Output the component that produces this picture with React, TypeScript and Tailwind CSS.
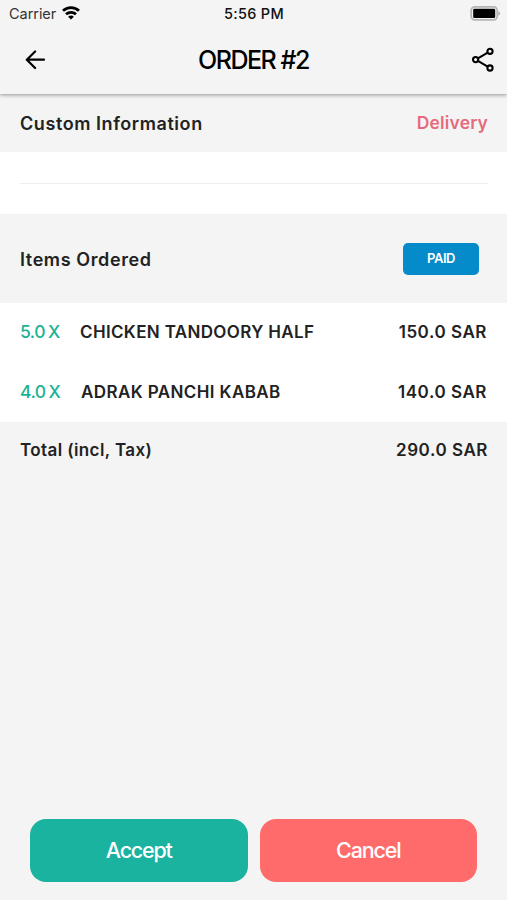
const items = [
  { qty: '5.0', name: 'CHICKEN TANDOORY HALF', price: '150.0 SAR', nameClass: 'ml-[19px] tracking-[0.35px]' },
  { qty: '4.0', name: 'ADRAK PANCHI KABAB', price: '140.0 SAR', nameClass: 'ml-5 tracking-[0.4px]' },
];

function StatusBar() {
  return (
    <div className="grid h-7 grid-cols-3 items-center pl-2 pr-[7px] text-[14.5px] leading-7">
      <div className="flex items-center gap-[6px]">
        <span className="pl-px text-[#333] tracking-[-0.05px]">Carrier</span>
        <svg width="18" height="14" viewBox="0 0 18 14" fill="none" stroke="#000" strokeWidth="2.7" className="mb-[3px]">
          <path d="M1 4.8C5.4.5 12.6.5 17 4.8" />
          <path d="M4 8.3C6.8 5.6 11.2 5.6 14 8.3" />
          <path d="M9 13.6 6.1 10.7C7.7 9.2 10.3 9.2 11.9 10.7Z" fill="#000" stroke="none" />
        </svg>
      </div>
      <span className="text-center font-medium tracking-[0.3px] text-[#111]">5:56 PM</span>
      <svg width="30" height="15" viewBox="0 0 30 15" className="mb-[2px] justify-self-end">
        <rect x="1.2" y="0.9" width="26" height="13" rx="3.6" fill="#f4f4f4" stroke="#b4b4b4" strokeWidth="1.7" />
        <rect x="3.2" y="2.8" width="22" height="9.2" rx="1.2" fill="#000" />
        <path d="M28.3 5.2c1.5.5 1.7 1.2 1.7 2.2s-.2 1.7-1.7 2.2Z" fill="#acacac" />
      </svg>
    </div>
  );
}

function Header() {
  return (
    <header className="relative z-10 h-[94px] shrink-0 bg-[#f4f4f4] shadow-[0_1px_4px_rgba(0,0,0,0.4)]">
      <StatusBar />
      <div className="grid h-16 grid-cols-[1fr_auto_1fr] items-center px-3">
        <svg width="21" height="20" viewBox="0 0 21 20" fill="none" stroke="#000" strokeWidth="2.2" strokeLinecap="round" strokeLinejoin="round" className="ml-[13px]">
          <path d="M19 9.7H2M10.1 1.5 1.8 9.7l8.3 8.3" />
        </svg>
        <h1 className="text-[25px] font-medium leading-8 tracking-[-1.45px] text-black">ORDER #2</h1>
        <svg width="24" height="26" viewBox="0 0 24 26" fill="none" stroke="#000" strokeWidth="2.1" className="justify-self-end">
          <circle cx="4.6" cy="12.6" r="2.6" />
          <circle cx="19" cy="4.3" r="2.6" />
          <circle cx="19" cy="21" r="2.6" />
          <path d="M6.9 11.3 16.7 5.6M6.9 13.9l9.8 5.8" />
        </svg>
      </div>
    </header>
  );
}

export default function App() {
  return (
    <div className="flex h-[900px] w-full flex-col bg-[#f4f4f4] font-['Inter','Liberation_Sans',sans-serif] text-[#222]">
      <Header />
      <section className="flex h-[58px] shrink-0 items-center justify-between pl-5 pr-[19px] text-[18px] font-semibold">
        <h2 className="tracking-[0.57px]">Custom Information</h2>
        <span className="text-[17.5px] tracking-[0.15px] text-[#e66a7c]">Delivery</span>
      </section>
      <div className="h-[62px] shrink-0 bg-white px-5 pt-[31px]">
        <div className="-mr-px h-px bg-[#eeeeee]" />
      </div>
      <section className="flex h-[89px] shrink-0 items-center justify-between pl-5 pr-7">
        <h2 className="pt-px text-[18px] font-semibold tracking-[0.6px]">Items Ordered</h2>
        <span className="flex h-8 w-[76px] items-center justify-center rounded-[5px] bg-[#058bc9] pt-px text-[13px] font-semibold tracking-[-0.5px] text-white">PAID</span>
      </section>
      <ul className="h-[119px] shrink-0 bg-white">
        {items.map((item) => (
          <li key={item.name} className="flex h-[60px] items-center px-5 text-[17px] font-semibold">
            <span className="w-[41px] whitespace-nowrap pb-px text-[17.5px] font-medium tracking-[-0.5px] text-[#1ab394]">
              {item.qty}<span className="ml-[3px]">X</span>
            </span>
            <span className={item.nameClass}>{item.name}</span>
            <span className="ml-auto tracking-[0.55px]">{item.price}</span>
          </li>
        ))}
      </ul>
      <section className="flex h-[57px] shrink-0 items-center justify-between pl-5 pr-[19px] pt-px text-[17px] font-semibold">
        <span className="tracking-[0.4px]">Total (incl, Tax)</span>
        <span className="tracking-[0.55px]">290.0 SAR</span>
      </section>
      <footer className="mt-auto flex gap-3 px-[30px] pb-[18px] text-[21.5px] font-medium text-white">
        <button className="h-[63px] flex-1 rounded-[16px] bg-[#1ab39f] tracking-[-1.2px]">Accept</button>
        <button className="h-[63px] flex-1 rounded-[16px] bg-[#ff6b6b] tracking-[-1.15px]">Cancel</button>
      </footer>
    </div>
  );
}
